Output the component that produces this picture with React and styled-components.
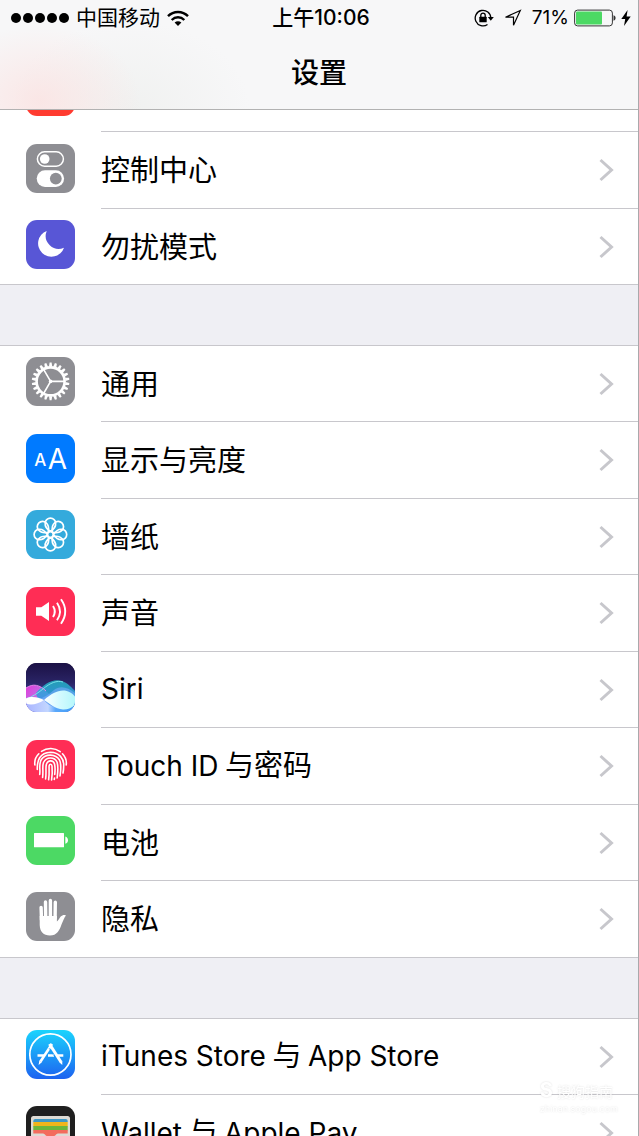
import React from "react";
import styled, { createGlobalStyle } from "styled-components";

const TEETH = Array.from({ length: 22 }, (_, i) => (i * 360) / 22);
const PETALS = [0, 45, 90, 135, 180, 225, 270, 315];

const NotificationIcon = () => (
  <Icon $bg="#ff3b30" viewBox="0 0 49 49" aria-hidden="true">
    <rect x="10" y="12" width="25" height="25" rx="5" fill="none" stroke="#fff" strokeWidth="2" />
    <circle cx="35" cy="14" r="5" fill="#fff" />
  </Icon>
);

const ControlIcon = () => (
  <Icon $bg="#8e8e93" viewBox="0 0 49 49" aria-hidden="true">
    <rect x="11.4" y="7.8" width="26" height="14.4" rx="7.2" fill="none" stroke="#fff" strokeWidth="1.5" />
    <circle cx="18.7" cy="15" r="4.8" fill="#fff" />
    <rect x="10.7" y="26.3" width="27.4" height="16.6" rx="8.3" fill="#fff" />
    <circle cx="29.8" cy="34.6" r="5.9" fill="#8e8e93" />
  </Icon>
);

const MoonIcon = () => (
  <Icon $bg="#5856d6" viewBox="0 0 49 49" aria-hidden="true">
    <path d="M20.7 11A13.3 13.3 0 1 0 38 27.7A13 13 0 0 1 20.7 11Z" fill="#fff" />
  </Icon>
);

const GearIcon = () => (
  <Icon $bg="#8e8e93" viewBox="0 0 49 49" aria-hidden="true">
    <g transform="translate(24.6 24.4)" stroke="#fff" fill="none">
      <circle r="14" strokeWidth="2.6" />
      {TEETH.map((deg) => (
        <path
          key={deg}
          d="M-1.6 -14.8L-1 -18.8H1L1.6 -14.8Z"
          fill="#fff"
          stroke="none"
          transform={`rotate(${deg})`}
        />
      ))}
      <path d="M0 0H14M0 0L-7 -12.1M0 0L-7 12.1" strokeWidth="1.6" />
      <circle r="1.8" fill="#fff" stroke="none" />
    </g>
  </Icon>
);

const DisplayIcon = () => (
  <Icon $bg="#007aff" viewBox="0 0 49 49" aria-hidden="true">
    <g fill="#fff" fontFamily="Inter, sans-serif" textAnchor="middle">
      <text x="14.3" y="31.5" fontSize="17" fontWeight="500">A</text>
      <text x="31.5" y="34.7" fontSize="28">A</text>
    </g>
  </Icon>
);

const WallpaperIcon = () => (
  <Icon $bg="#34aadc" viewBox="0 0 49 49" aria-hidden="true">
    <g transform="translate(24.4 24.5)" stroke="#fff" strokeWidth="1.7" fill="none">
      {PETALS.map((deg) => (
        <path
          key={deg}
          d="M0 -3C-3 -5 -5.6 -8 -5.2 -11.5A5.2 4.8 0 0 1 5.2 -11.5C5.6 -8 3 -5 0 -3"
          transform={`rotate(${deg})`}
        />
      ))}
      <circle r="2.8" />
    </g>
  </Icon>
);

const SoundIcon = () => (
  <Icon $bg="#ff2d55" viewBox="0 0 49 49" aria-hidden="true">
    <path d="M10 20.3H15.3L23 15V34L15.3 28.7H10Z" fill="#fff" />
    <g fill="none" stroke="#fff" strokeWidth="1.9">
      <path d="M27 19Q30.6 24.5 27 30" />
      <path d="M31 15.7Q37 24.5 31 33.3" />
      <path d="M35 12.3Q43.5 24.5 35 36.7" />
    </g>
  </Icon>
);

const SiriIcon = () => (
  <Icon $bg="#140f33" viewBox="0 0 49 49" aria-hidden="true">
    <defs>
      <linearGradient id="siriSky" x1="0" y1="0" x2="0" y2="1">
        <stop offset="0" stopColor="#1b1145" />
        <stop offset="0.4" stopColor="#2a2465" />
        <stop offset="1" stopColor="#4a6fe0" />
      </linearGradient>
      <linearGradient id="siriPink" x1="0" y1="0" x2="1" y2="0.5">
        <stop offset="0" stopColor="#e43bd8" />
        <stop offset="0.6" stopColor="#a78cf0" />
        <stop offset="1" stopColor="#6f7ff0" />
      </linearGradient>
      <linearGradient id="siriTeal" x1="0" y1="0" x2="0" y2="1">
        <stop offset="0" stopColor="#23b6c4" />
        <stop offset="0.55" stopColor="#2f9be0" />
        <stop offset="1" stopColor="#3f8ff2" />
      </linearGradient>
      <linearGradient id="siriGlow" x1="0" y1="0" x2="1" y2="0">
        <stop offset="0" stopColor="#ffffff" />
        <stop offset="0.5" stopColor="#d4fbff" />
        <stop offset="1" stopColor="#b5f7fb" />
      </linearGradient>
      <linearGradient id="siriBase" x1="0" y1="0" x2="1" y2="0">
        <stop offset="0" stopColor="#a9b4ff" />
        <stop offset="0.45" stopColor="#c3d6ff" />
        <stop offset="0.6" stopColor="#5aa8fb" />
        <stop offset="1" stopColor="#3d9bf5" />
      </linearGradient>
    </defs>
    <rect width="49" height="49" fill="url(#siriSky)" />
    <path d="M0 25C7 20 14 22 20 28C28 36 36 42 49 38V49H0Z" fill="url(#siriPink)" />
    <path d="M10 30C18 21 27 15 36 18C42 20 46 25 49 28V49H22C16 44 12 38 10 30Z" fill="url(#siriTeal)" opacity="0.85" />
    <path d="M0 36C6 34 12 30 17 26C24 20 31 17 37 19" fill="none" stroke="#7fe6ee" strokeWidth="0.9" />
    <path d="M0 25C7 20 14 22 20 28" fill="none" stroke="#f28df0" strokeWidth="0.9" />
    <path d="M0 38C12 38 20 34 28 27C34 22 42 24 49 30V49H0Z" fill="#7faeff" opacity="0.55" />
    <path d="M0 39C8 40 14 38 18 37C24 45 36 48 49 41V49H0Z" fill="url(#siriBase)" />
    <path d="M0 35.5C5 33 12 34 18 37C12 41 5 43 0 40.5Z" fill="#fff" />
    <path d="M18 37C25 31 31 27.5 37 27.5C42 27.5 46 30 49 33.5V42C45 45.5 41 46.7 37 46.5C29 46 24 40.5 18 37Z" fill="url(#siriGlow)" />
  </Icon>
);

const TouchIcon = () => (
  <Icon $bg="#ff2d55" viewBox="0 0 49 49" aria-hidden="true">
    <g fill="none" stroke="#fff" strokeWidth="1.6" strokeLinecap="round">
      <path d="M15.5 11.4A16 16 0 0 1 34.2 11.7" />
      <path d="M36.5 13.8C39.5 17 40.8 21 40.2 25" />
      <path d="M12.8 13.8C9.5 17 8.3 21 8.9 25" />
      <path d="M11.3 29.5C11 21 13.5 12.5 24.5 12.2C33.5 12.3 37.8 19 37.7 25C37.7 28 37.6 30.5 37 33" />
      <path d="M13.7 34.5C14.5 29 12.5 24.5 15.3 19.5C19.5 13.5 29.5 13.7 33.5 20C35.8 25 34.8 30 34 36" />
      <path d="M16.6 37.5C17.5 31 16 26.5 17.5 22.5C20.5 16.5 28.5 16.7 31 22C32.7 27 31.8 32 31.1 38" />
      <path d="M19.6 39C20.5 33 19.5 27.5 20.3 24.5C22 19.5 27.5 19.8 28.6 24.3C29.5 29 29 31.5 28.7 34.5" />
      <path d="M22.6 39.8C23.6 34 22.9 29 23.1 26C23.6 23.5 25.7 23.7 26 26C26.5 31 26.2 35.5 25.6 40" />
      <path d="M28.5 38L28.3 39.5" />
    </g>
  </Icon>
);

const BatteryIcon = () => (
  <Icon $bg="#4cd964" viewBox="0 0 49 49" aria-hidden="true">
    <rect x="8" y="17" width="30" height="14.3" rx="0.6" fill="#fff" />
    <path d="M39.3 20.5C41 21 42 22.5 42 24.2S41 27.3 39.3 27.8Z" fill="#fff" />
  </Icon>
);

const PrivacyIcon = () => (
  <Icon $bg="#8e8e93" viewBox="0 0 49 49" aria-hidden="true">
    <g stroke="#fff" strokeWidth="3.4" strokeLinecap="round">
      <path d="M15.1 15.5L15.5 28M19.5 10L19.7 26M24.4 8.5V26M29.3 10.3L29.1 26" />
    </g>
    <path
      d="M13.7 24H30.9V29.5C32.3 28.5 33.5 26 34.7 24.5C36.2 23 38.5 22.4 39.9 23.4C38.3 25.5 37 29 35.5 32.5C33.5 38.5 31 43.5 23.9 43.5C17.5 43.5 13.9 39.5 13.7 33Z"
      fill="#fff"
    />
  </Icon>
);

const StoreIcon = () => (
  <Icon $bg="linear-gradient(#1ad4fd, #1d62f0)" viewBox="0 0 49 49" aria-hidden="true">
    <circle cx="24.4" cy="24.5" r="20.6" fill="none" stroke="#fff" strokeWidth="1.7" />
    <g stroke="#fff" fill="none">
      <path d="M26 14L14.5 31.5" strokeWidth="2.6" />
      <path d="M23.5 14L35 32" strokeWidth="3" />
      <path d="M11.5 25.5H19M22 25.5H28M31.5 25.5H37.3" strokeWidth="2.4" />
    </g>
    <path d="M13.3 30.5L15.9 32.2L12.6 35ZM33.5 32.5L36.3 30.8L36.3 35Z" fill="#fff" />
    <path d="M23 18L32 32" stroke="#1c92f7" strokeWidth="0.6" />
  </Icon>
);

const WalletIcon = () => (
  <Icon $bg="#1f1f1f" viewBox="0 0 49 49" aria-hidden="true">
    <rect x="5" y="10" width="39" height="34" rx="2.5" fill="#dedbd5" />
    <path d="M7.3 16V15A2 2 0 0 1 9.3 13H39.7A2 2 0 0 1 41.7 15V16Z" fill="#4098c4" />
    <rect x="7.3" y="16" width="34.4" height="4.5" fill="#f0b51b" />
    <rect x="7.3" y="20" width="34.4" height="4.5" fill="#6cb63c" />
    <rect x="7.3" y="24" width="34.4" height="8" fill="#f36c5d" />
    <path d="M5 27.5H17C19 27.5 19.5 31 24.5 31S30 27.5 32 27.5H44V41.5A2.5 2.5 0 0 1 41.5 44H7.5A2.5 2.5 0 0 1 5 41.5Z" fill="#dedbd5" />
  </Icon>
);

const groups = [
  [
    { label: "通知", icon: NotificationIcon },
    { label: "控制中心", icon: ControlIcon },
    { label: "勿扰模式", icon: MoonIcon },
  ],
  [
    { label: "通用", icon: GearIcon },
    { label: "显示与亮度", icon: DisplayIcon },
    { label: "墙纸", icon: WallpaperIcon },
    { label: "声音", icon: SoundIcon },
    { label: "Siri", icon: SiriIcon },
    { label: "Touch ID 与密码", icon: TouchIcon },
    { label: "电池", icon: BatteryIcon },
    { label: "隐私", icon: PrivacyIcon },
  ],
  [
    { label: "iTunes Store 与 App Store", icon: StoreIcon },
    { label: "Wallet 与 Apple Pay", icon: WalletIcon },
  ],
];

/* latin words get their own font and size next to the chinese ones */
const splitLabel = (label) =>
  label
    .split(/([A-Za-z][A-Za-z ]*[A-Za-z])/)
    .filter(Boolean)
    .map((part) => (/[A-Za-z]/.test(part) ? <Latin key={part}>{part}</Latin> : part));

const StatusBar = () => (
  <Status>
    <StatusSide>
      <Signal>
        <Dot />
        <Dot />
        <Dot />
        <Dot />
        <Dot />
      </Signal>
      <Carrier>中国移动</Carrier>
      <svg width="22" height="17" viewBox="0 0 22 17" aria-hidden="true">
        <g fill="none" stroke="#000" strokeWidth="2.4">
          <path d="M1 6.2C6.5 0.6 15.5 0.6 21 6.2" />
          <path d="M4.7 10C8.3 6.4 13.7 6.4 17.3 10" />
        </g>
        <path d="M7.6 12.5C9.6 10.7 12.4 10.7 14.4 12.5L11 16Z" />
      </svg>
    </StatusSide>
    <Time>上午10:06</Time>
    <StatusSide $end>
      <svg width="20" height="18" viewBox="0 0 20 18" aria-hidden="true">
        <path d="M13.5 15.5A7.8 7.8 0 1 1 16.8 9" fill="none" stroke="#000" strokeWidth="1.3" />
        <path d="M13.8 8H19.8L16.8 11.8Z" />
        <rect x="5.3" y="7.8" width="7.4" height="5.4" rx="0.5" />
        <path d="M6.8 8V6.3A2.2 2.2 0 0 1 11.2 6.3V8" fill="none" stroke="#000" strokeWidth="1.3" />
      </svg>
      <Location width="18" height="18" viewBox="0 0 18 18" aria-hidden="true">
        <path d="M16.3 1.5L1.5 8.2H9.5V16.3Z" fill="none" stroke="#000" strokeWidth="1.2" />
      </Location>
      <Percent>71%</Percent>
      <svg width="42" height="18" viewBox="0 0 42 18" aria-hidden="true">
        <rect x="0.6" y="1.1" width="37.8" height="15.8" rx="3" fill="none" stroke="#333" strokeWidth="1" />
        <rect x="2" y="2.5" width="26" height="13" rx="1" fill="#4cd964" />
        <path d="M39.5 6.3C42.3 7 42.3 11 39.5 11.7Z" fill="#333" />
      </svg>
      <svg width="10" height="16" viewBox="0 0 10 16" aria-hidden="true">
        <path d="M6.6 0L0.3 9H4.2L3 16L9.7 6.5H5.6Z" />
      </svg>
    </StatusSide>
  </Status>
);

const App = () => {
  return (
    <Screen>
      <GlobalStyle />
      <Header>
        <StatusBar />
        <Title>设置</Title>
      </Header>
      <List>
        {groups.map((rows) => (
          <Group key={rows[0].label}>
            {rows.map(({ label, icon: RowIcon }) => (
              <Row key={label} href="#">
                <RowIcon />
                <RowBody>
                  <Label>{splitLabel(label)}</Label>
                  <svg width="15" height="24" viewBox="0 0 15 24" aria-hidden="true">
                    <path d="M1.5 2L12.5 12L1.5 22" fill="none" stroke="#c7c7cc" strokeWidth="3" />
                  </svg>
                </RowBody>
              </Row>
            ))}
          </Group>
        ))}
      </List>
      <Watermark>
        <strong>S</strong> 搜狗指南
        <small>zhinan.sogou.com</small>
      </Watermark>
    </Screen>
  );
};

export default App;

const GlobalStyle = createGlobalStyle`
  * {
    box-sizing: border-box;
  }
  body {
    margin: 0;
    background: #efeff4;
    color: #000;
    font-family: Inter, "Noto Sans CJK SC", sans-serif;
  }
`;

const Screen = styled.main`
  position: relative;
  height: 100vh;
  overflow: hidden;
  border-right: 1px solid #a9a9ac;
`;

const Header = styled.header`
  position: sticky;
  top: 0;
  z-index: 1;
  height: 110px;
  border-bottom: 1px solid #b2b2b2;
  background:
    radial-gradient(ellipse 100px 75px at 40px 100px, rgba(251, 226, 225, 0.8), rgba(251, 228, 227, 0)),
    radial-gradient(ellipse 120px 90px at 130px 110px, #f0f1f0, rgba(240, 241, 240, 0)),
    #f7f7f8;
`;

const Status = styled.div`
  display: grid;
  grid-template-columns: 1fr auto 1fr;
  align-items: center;
  height: 36px;
  padding: 0 7px 0 11px;
  font-size: 20px;
  line-height: 36px;
`;

const StatusSide = styled.div`
  display: flex;
  align-items: center;
  justify-content: ${({ $end }) => ($end ? "flex-end" : "flex-start")};
  gap: ${({ $end }) => ($end ? "5px" : "7px")};
`;

const Signal = styled.div`
  display: flex;
  gap: 2px;
`;

const Dot = styled.span`
  width: 10px;
  height: 10px;
  border-radius: 50%;
  background: #000;
`;

const Carrier = styled.span`
  font-size: 21px;
`;

const Time = styled.time`
  font-size: 21px;
  font-weight: 500;
`;

const Location = styled.svg`
  margin: 0 5px;
`;

const Percent = styled.span`
  font-size: 19px;
`;

const Title = styled.h1`
  margin: 0;
  font-size: 28px;
  font-weight: 500;
  line-height: 74px;
  text-align: center;
`;

/* the list is scrolled a little, its first row runs under the header */
const List = styled.nav`
  display: grid;
  gap: 60px;
  margin-top: -55px;
`;

const Group = styled.section`
  display: grid;
  grid-auto-rows: 76px 77px;
  border-top: 1px solid #c8c7cc;
  background: #fff;
`;

const RowBody = styled.div`
  display: flex;
  flex: 1;
  align-items: center;
  justify-content: space-between;
  height: 100%;
  padding-right: 24px;
  border-bottom: 1px solid #c8c7cc;
`;

const Row = styled.a`
  display: flex;
  align-items: center;
  gap: 26px;
  padding-left: 26px;
  color: inherit;
  text-decoration: none;

  &:last-child {
    border-bottom: 1px solid #c8c7cc;
  }
  &:last-child ${RowBody} {
    border-bottom: 0;
  }
`;

const Icon = styled.svg`
  flex: none;
  width: 49px;
  height: 49px;
  margin-bottom: 5px;
  border-radius: 11px;
  background: ${({ $bg }) => $bg};
`;

const Label = styled.span`
  padding-bottom: 4px;
  font-family: "Noto Sans CJK SC", sans-serif;
  font-size: 29px;
  line-height: 40px;
  white-space: nowrap;
`;

const Latin = styled.span`
  font-family: Inter, sans-serif;
  font-size: 28px;
`;

const Watermark = styled.div`
  position: absolute;
  right: 20px;
  bottom: 20px;
  z-index: 1;
  color: #fff;
  font-size: 14px;
  line-height: 20px;
  text-shadow: 0 0 2px rgba(0, 0, 0, 0.15);

  strong {
    font-size: 20px;
  }
  small {
    display: block;
    font-size: 9px;
    line-height: 14px;
  }
`;
